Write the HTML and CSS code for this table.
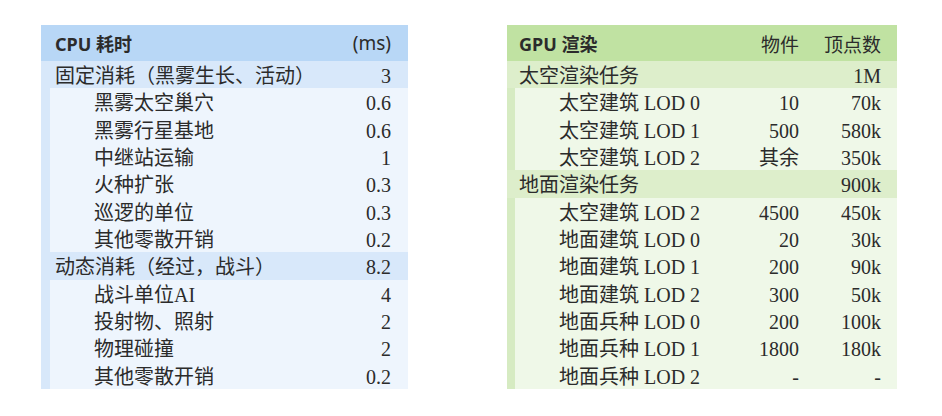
FILE: index.html
```html
<!DOCTYPE html>
<html lang="zh">
<head>
<meta charset="utf-8">
<title>CPU / GPU</title>
<link rel="stylesheet" href="styles.css">
</head>
<body>
<div class="page">
  <div class="tbl cpu">
    <div class="row head"><span class="h-title">CPU 耗时</span><span class="h-unit">(ms)</span></div>
    <div class="row grp"><span class="lbl">固定消耗（黑雾生长、活动）</span><span class="num">3</span></div>
    <div class="row sub"><span class="lbl">黑雾太空巢穴</span><span class="num">0.6</span></div>
    <div class="row sub"><span class="lbl">黑雾行星基地</span><span class="num">0.6</span></div>
    <div class="row sub"><span class="lbl">中继站运输</span><span class="num">1</span></div>
    <div class="row sub"><span class="lbl">火种扩张</span><span class="num">0.3</span></div>
    <div class="row sub"><span class="lbl">巡逻的单位</span><span class="num">0.3</span></div>
    <div class="row sub"><span class="lbl">其他零散开销</span><span class="num">0.2</span></div>
    <div class="row grp"><span class="lbl">动态消耗（经过，战斗）</span><span class="num">8.2</span></div>
    <div class="row sub"><span class="lbl">战斗单位AI</span><span class="num">4</span></div>
    <div class="row sub"><span class="lbl">投射物、照射</span><span class="num">2</span></div>
    <div class="row sub"><span class="lbl">物理碰撞</span><span class="num">2</span></div>
    <div class="row sub"><span class="lbl">其他零散开销</span><span class="num">0.2</span></div>
  </div>

  <div class="tbl gpu">
    <div class="row head"><span class="h-title">GPU 渲染</span><span class="h-col">物件</span><span class="h-col">顶点数</span></div>
    <div class="row grp"><span class="lbl">太空渲染任务</span><span class="num"></span><span class="num">1M</span></div>
    <div class="row sub"><span class="lbl">太空建筑 LOD 0</span><span class="num">10</span><span class="num">70k</span></div>
    <div class="row sub"><span class="lbl">太空建筑 LOD 1</span><span class="num">500</span><span class="num">580k</span></div>
    <div class="row sub"><span class="lbl">太空建筑 LOD 2</span><span class="num">其余</span><span class="num">350k</span></div>
    <div class="row grp"><span class="lbl">地面渲染任务</span><span class="num"></span><span class="num">900k</span></div>
    <div class="row sub"><span class="lbl">太空建筑 LOD 2</span><span class="num">4500</span><span class="num">450k</span></div>
    <div class="row sub"><span class="lbl">地面建筑 LOD 0</span><span class="num">20</span><span class="num">30k</span></div>
    <div class="row sub"><span class="lbl">地面建筑 LOD 1</span><span class="num">200</span><span class="num">90k</span></div>
    <div class="row sub"><span class="lbl">地面建筑 LOD 2</span><span class="num">300</span><span class="num">50k</span></div>
    <div class="row sub"><span class="lbl">地面兵种 LOD 0</span><span class="num">200</span><span class="num">100k</span></div>
    <div class="row sub"><span class="lbl">地面兵种 LOD 1</span><span class="num">1800</span><span class="num">180k</span></div>
    <div class="row sub"><span class="lbl">地面兵种 LOD 2</span><span class="num">-</span><span class="num">-</span></div>
  </div>
</div>
</body>
</html>
```

FILE: styles.css
```css
html, body {
  margin: 0;
  padding: 0;
  background: #ffffff;
}

.page {
  display: flex;
  align-items: flex-start;
  gap: 99px;
  padding: 25px 0 0 41px;
  color: #2b2b2b;
  font-family: "Liberation Serif", "Noto Sans CJK SC", serif;
  font-size: 20px;
}

.tbl {
  display: grid;
  grid-template-rows: 36px repeat(12, 27.33px);
}

.cpu { width: 367px; }
.gpu { width: 390px; }

.row {
  display: grid;
  align-items: center;
  line-height: 1;
  padding-top: 3px;
}

.row.head { padding-top: 1px; }

.cpu .row { grid-template-columns: 1fr auto; padding-right: 17px; }
.gpu .row { grid-template-columns: 1fr 80px 82px; padding-right: 16px; }

.row .lbl {
  white-space: nowrap;
}

.num {
  text-align: right;
  white-space: nowrap;
}

.head {
  font-family: "Noto Sans", "Noto Sans CJK SC", sans-serif;
}

.h-title {
  font-weight: 700;
  font-size: 18px;
}

.h-unit, .h-col {
  font-family: "Noto Sans CJK SC", "Noto Sans", sans-serif;
  font-size: 19px;
  text-align: right;
}

.h-unit {
  font-family: "Noto Sans", sans-serif;
  font-weight: 400;
}

.cpu .head { background: #b8d7f6; padding-left: 14px; }
.cpu .grp { background: #d8e8fa; padding-left: 14px; }
.cpu .sub {
  background: #eef5fd;
  border-left: 9px solid #d8e8fa;
  padding-left: 44px;
}

.gpu .head { background: #c0e2a2; padding-left: 12px; }
.gpu .grp { background: #ddeecb; padding-left: 12px; }
.gpu .sub {
  background: #eff8e8;
  border-left: 8px solid #d6ebc2;
  padding-left: 44px;
}
```
